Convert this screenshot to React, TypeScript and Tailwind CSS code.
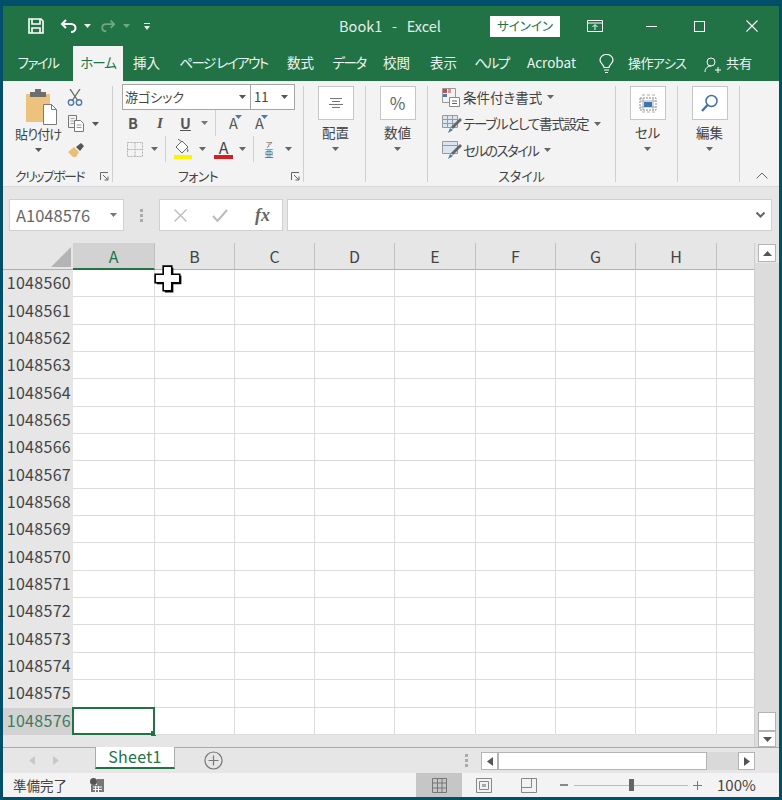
import React from "react";

const Caret = ({ c = "#666", className = "" }: { c?: string; className?: string }) => (
  <svg width="7" height="4" viewBox="0 0 7 4" className={className}><path d="M0 0h7L3.5 4z" fill={c} /></svg>
);

const Sep = ({ h = "h-[22px]" }: { h?: string }) => <div className={`w-px ${h} bg-[#d0d0d0]`} />;

const TitleBar = () => (
  <div className="h-[40px] flex items-center text-white shrink-0">
    <div className="w-[25px]" />
    <svg width="16" height="16" viewBox="0 0 16 16" fill="none" stroke="#fff" strokeWidth="1.6"><path d="M1 1h12l2 2v12H1z" /><path d="M4 1v5h8V1M4 15v-5h8v5" /></svg>
    <div className="w-[16px]" />
    <svg width="18" height="14" viewBox="0 0 18 14" fill="none" stroke="#fff" strokeWidth="2"><path d="M6 1L2 5l4 4" /><path d="M2 5h9c6 0 6 8 0 8" /></svg>
    <Caret c="#e6efe9" className="ml-[6px]" />
    <svg width="16" height="14" viewBox="0 0 18 14" fill="none" stroke="#6fa88a" strokeWidth="2" className="ml-[9px]"><path d="M12 1l4 4-4 4" /><path d="M16 5H7c-6 0-6 8 0 8" /></svg>
    <Caret c="#6fa88a" className="ml-[7px]" />
    <svg width="6" height="7" viewBox="0 0 6 7" className="ml-[14px]"><path d="M0 0h6v1H0z" fill="#e6efe9" /><path d="M0 3h6L3 7z" fill="#e6efe9" /></svg>
    <div className="ml-[188px] w-[104px] text-center text-[14.5px] text-[#e3eee8] whitespace-pre">Book1   -   Excel</div>
    <div className="ml-[48px] w-[70px] h-[21px] bg-white text-[#217346] text-[12.5px] flex items-center justify-center">サインイン</div>
    <svg width="16" height="12" viewBox="0 0 16 12" fill="none" stroke="#fff" className="ml-[27px]"><path d="M.5.5h15v11H.5zM.5 3h15" /><path d="M8 10V5M5.5 7L8 4.500 10.500 7" /></svg>
    <div className="ml-[43px] w-[11px] h-px bg-white" />
    <div className="ml-[37px] w-[11px] h-[11px] border border-white" />
    <svg width="12" height="12" viewBox="0 0 12 12" stroke="#fff" strokeWidth="1.1" className="ml-[41px]"><path d="M.5.5l11 11M11.500.5l-11 11" /></svg>
  </div>
);

const tabs: [string, string, string][] = [
  ["ファイル", "w-[70px]", "tracking-[-1.5px]"],
  ["ホーム", "w-[50px]", "tracking-[-1px]"],
  ["挿入", "w-[47px]", ""],
  ["ページ レイアウト", "w-[107px]", "tracking-[-1.5px]"],
  ["数式", "w-[47px]", ""],
  ["データ", "w-[50px]", "tracking-[-1.5px]"],
  ["校閲", "w-[45px]", ""],
  ["表示", "w-[49px]", ""],
  ["ヘルプ", "w-[47px]", "tracking-[-1.5px]"],
  ["Acrobat", "w-[73px]", ""],
];

const TabBar = () => (
  <div className="h-[35px] flex text-[13.5px] text-[#eef5f1] shrink-0">
    {tabs.map(([t, w, k]) => (
      <div key={t} className={`${w} ${k} flex items-center justify-center whitespace-nowrap pb-[2px] ${t === "ホーム" ? "bg-[#f3f3f3] text-[#217346]" : ""}`}>{t}</div>
    ))}
    <div className="w-[36px] flex items-center justify-center">
      <svg width="15" height="20" viewBox="0 0 15 19" fill="none" stroke="#fff" strokeWidth="1.2"><path d="M5 13c0-3-4-4-4-7.500a6.500 5.500 0 0 1 13 0C14 9 10 10 10 13z" /><path d="M5 15.500h5M6 18h3" /></svg>
    </div>
    <div className="ml-[4px] w-[57px] whitespace-nowrap flex items-center text-[13px] pb-[2px] tracking-[-0.6px]">操作アシス</div>
    <svg width="17" height="17" viewBox="0 0 17 17" fill="none" stroke="#fff" className="ml-[19px] mt-[11px]"><circle cx="7" cy="5" r="4" /><path d="M1 15c0-4 3-6 6-6M11 13h6M14 10v6" /></svg>
    <div className="ml-[5px] flex items-center text-[13px] pb-[1px]">共有</div>
  </div>
);

const PasteIcon = () => (
  <svg width="33" height="36" viewBox="0 0 33 36">
    <path d="M1 5h24v28H1z" fill="#ecc27d" />
    <path d="M5 3h5V0h6v3h5v5H5z" fill="#6e6e6e" />
    <path d="M18.500 15.500h8l5 5v15h-13z" fill="#fff" stroke="#7a7a7a" />
    <path d="M26.500 15.500v5h5" fill="none" stroke="#7a7a7a" />
  </svg>
);

const Scissors = () => (
  <svg width="16" height="17" viewBox="0 0 16 17" fill="none">
    <path d="M3 0l8 12M13 0L5 12" stroke="#666" strokeWidth="1.300" />
    <circle cx="4" cy="13.500" r="2.700" stroke="#4f7aa8" strokeWidth="1.400" />
    <circle cx="12" cy="13.500" r="2.700" stroke="#4f7aa8" strokeWidth="1.400" />
  </svg>
);

const Copy = () => (
  <svg width="17" height="17" viewBox="0 0 17 17" fill="none" stroke="#777">
    <path d="M.5.500h8v12h-8z" fill="#f3f3f3" />
    <path d="M2.500 3.500h4M2.500 6h4M2.500 8.500h4" stroke="#aaa" />
    <path d="M6.500 5.500h6l3 3v8h-9z" fill="#fff" />
    <path d="M8.500 10h5M8.500 12.500h5" stroke="#999" />
  </svg>
);

const Brush = () => (
  <svg width="16" height="14" viewBox="0 0 16 14">
    <path d="M0 9l6-5 5 5-3 5H5z" fill="#e8bf74" />
    <path d="M8 4l5-4 3 3-4 5z" fill="#555" />
  </svg>
);

const Launcher = () => (
  <svg width="9" height="9" viewBox="0 0 9 9" fill="none" stroke="#666" className="mt-[1px]"><path d="M.5 8V.500H8" /><path d="M3 3l5 5M8 4.500V8H4.500" /></svg>
);

const Label = ({ children, className = "" }: { children: React.ReactNode; className?: string }) => (
  <div className={`h-[12px] mt-[1px] flex items-center text-[13px] text-[#444] whitespace-nowrap ${className}`}>{children}</div>
);

const Clipboard = () => (
  <div className="w-[110px] border-r border-[#cfcfcf] h-[96px] mt-[5px] flex flex-col">
    <div className="flex h-[84px]">
      <div className="w-[67px] flex flex-col">
        <div className="mt-[3px] ml-[22px]"><PasteIcon /></div>
        <div className="ml-[12px] text-[13px] leading-[18px] tracking-[-0.8px]">貼り付け</div>
        <Caret c="#555" className="mt-[5px] ml-[32px]" />
      </div>
      <div className="flex flex-col pt-[3px]">
        <div className="ml-[-3px]"><Scissors /></div>
        <div className="flex items-center mt-[9px] ml-[-2px]"><Copy /><Caret c="#555" className="ml-[7px]" /></div>
        <div className="ml-[-2px] mt-[11px]"><Brush /></div>
      </div>
    </div>
    <Label className="pl-[12px] pr-[3px] justify-between"><span className="tracking-[-1.6px]">クリップボード</span><Launcher /></Label>
  </div>
);

const Fill = () => (
  <svg width="20" height="20" viewBox="0 0 20 20">
    <path d="M3 8l6-6 6 6-6 6z" fill="#fff" stroke="#666" />
    <path d="M5 0l4 3" stroke="#666" fill="none" />
    <path d="M14 9c2 2 2 4 0 4z" fill="#5b8bbd" />
    <path d="M1 16h18v4H1z" fill="#fff200" />
  </svg>
);

const FontGroup = () => (
  <div className="w-[191px] border-r border-[#cfcfcf] h-[96px] mt-[5px] flex flex-col pl-[9px]">
    <div className="h-[84px] flex flex-col">
      <div className="flex h-[26px] mt-[-2px]">
        <div className="w-[129px] bg-white border border-[#a6a6a6] flex items-center justify-between px-[2px] text-[13px]">
          <span>游ゴシック</span><Caret c="#555" className="mr-[2px]" />
        </div>
        <div className="w-[44px] bg-white border border-l-0 border-[#a6a6a6] flex items-center justify-between pl-[3px] pr-[6px] text-[13px]">
          <span>11</span><Caret c="#555" />
        </div>
      </div>
      <div className="flex items-center h-[26px] text-[#555]">
        <div className="w-[26px] pl-[6px] font-bold text-[14.5px]">B</div>
        <div className="w-[26px] pl-[9px] italic font-bold text-[15px] font-['Liberation_Serif',serif]">I</div>
        <div className="w-[25px] pl-[6px] font-bold text-[14.5px] underline">U</div>
        <Caret c="#777" className="ml-[2px]" />
        <div className="ml-[7px] mr-[13px]"><Sep h="h-[26px]" /></div>
        <div className="w-[26px] text-[14.5px] flex items-start">A<Caret c="#4f7aa8" className="mt-[3px] -ml-[3px]" /></div>
        <div className="text-[14.5px] flex items-start">A<Caret c="#4f7aa8" className="mt-[3px] -ml-[3px]" /></div>
      </div>
      <div className="flex items-center h-[26px]">
        <svg width="16" height="15" viewBox="0 0 16 15" fill="none" stroke="#b0b0b0" strokeDasharray="2 1" className="ml-[5px]"><path d="M.5.500h15v14H.5zM8 .5v14M.5 7.500h15" /></svg>
        <Caret c="#666" className="ml-[8px]" />
        <div className="ml-[7px]"><Sep h="h-[26px]" /></div>
        <div className="ml-[7px]"><Fill /></div>
        <Caret c="#666" className="ml-[6px]" />
        <div className="ml-[8px] w-[19px] flex flex-col items-center leading-none">
          <span className="text-[16px] h-[16px] leading-[16px] text-[#444]">A</span>
          <div className="w-[19px] h-[4px] bg-[#d81e1e]" />
        </div>
        <Caret c="#666" className="ml-[6px]" />
        <div className="ml-[7px]"><Sep h="h-[26px]" /></div>
        <div className="ml-[10px] w-[10px] flex flex-col items-center text-[#555] leading-none">
          <span className="text-[7px] h-[9px] leading-[9px]">ア</span>
          <span className="text-[9px] h-[10px] leading-[10px]">亜</span>
        </div>
        <Caret c="#666" className="ml-[11px]" />
      </div>
    </div>
    <Label className="justify-between pr-[3px]"><span className="ml-[56px] tracking-[-0.6px]">フォント</span><Launcher /></Label>
  </div>
);

const BigGroup = ({ label, icon }: { label: string; icon: React.ReactNode }) => (
  <div className="w-[62px] border-r border-[#cfcfcf] h-[96px] mt-[5px] flex flex-col items-center pl-[2px]">
    <div className="w-[36px] h-[34px] bg-white border border-[#c6c6c6] flex items-center justify-center">{icon}</div>
    <div className="text-[13.5px] mt-[3px] leading-[18px]">{label}</div>
    <Caret c="#666" className="mt-[6px]" />
  </div>
);

const AlignIcon = () => (
  <svg width="14" height="10" viewBox="0 0 14 10" stroke="#777"><path d="M1 .5h12M3 3.500h8M0 6.500h14M3 9.500h8" /></svg>
);

const CellIcon = () => (
  <svg width="18" height="19" viewBox="0 0 18 19" fill="none">
    <path d="M1 4h16v12H1z" stroke="#888" strokeDasharray="2 1" />
    <path d="M3 1h3M8 1h3M13 1h3M3 18h3M8 18h3M13 18h3M4 4v12M14 4v12M1 7h16M1 13h16" stroke="#aaa" />
    <path d="M5 8h8v5H5z" fill="#3d76b0" />
  </svg>
);

const SearchIcon = () => (
  <svg width="18" height="18" viewBox="0 0 18 18" fill="none"><circle cx="10.500" cy="7" r="5.500" stroke="#3f6fa5" strokeWidth="1.500" /><path d="M6.500 11L1 17" stroke="#3f6fa5" strokeWidth="2.200" /></svg>
);

const Cond = () => (
  <svg width="18" height="19" viewBox="0 0 18 19" fill="none">
    <path d="M.5.500h13v14H.5z" stroke="#999" />
    <path d="M1 1h4v4H1z" fill="#c0504d" /><path d="M1 6h4v3H1z" fill="#4f7aa8" /><path d="M6 1h3v4H6z" fill="#d99694" />
    <path d="M7.500 9.500h10v9h-10z" fill="#fff" stroke="#888" /><path d="M10 13h5M10 15.500h5" stroke="#666" />
  </svg>
);

const TableIcon = () => (
  <svg width="20" height="18" viewBox="0 0 20 18" fill="none">
    <path d="M.5.500h15v12H.5z" stroke="#999" fill="#dbe5f1" />
    <path d="M.5 4.500h15M.5 8.500h15M5.500.5v12M10.500.5v12" stroke="#999" />
    <path d="M18 3l2 2-9 9-2-2z" fill="#666" /><path d="M8 13l3 2-5 3z" fill="#4f7aa8" />
  </svg>
);

const StyleIcon = () => (
  <svg width="20" height="18" viewBox="0 0 20 18" fill="none">
    <path d="M.5.500h15v12H.5z" stroke="#999" fill="#dbe5f1" />
    <path d="M.5 4.500h15" stroke="#999" />
    <path d="M18 3l2 2-9 9-2-2z" fill="#666" /><path d="M8 13l3 2-5 3z" fill="#4f7aa8" />
  </svg>
);

const StyleGroup = () => (
  <div className="w-[188px] border-r border-[#cfcfcf] h-[96px] mt-[5px] flex flex-col">
    <div className="h-[84px] pl-[14px] flex flex-col text-[13.5px] -mt-[1px]">
      <div className="h-[26px] flex items-center gap-[3px] pb-[2px]"><Cond /><span>条件付き書式</span><Caret c="#666" className="ml-[2px]" /></div>
      <div className="h-[26px] flex items-center gap-[1px] pb-[1px]"><TableIcon /><span className="tracking-[-1.2px]">テーブルとして書式設定</span><Caret c="#666" className="ml-[5px]" /></div>
      <div className="h-[26px] flex items-center gap-[1px]"><StyleIcon /><span className="tracking-[-1.7px]">セルのスタイル</span><Caret c="#666" className="ml-[5px]" /></div>
    </div>
    <Label className="justify-center mt-[2px] text-[13.5px]">スタイル</Label>
  </div>
);

const Ribbon = () => (
  <div className="h-[106px] bg-[#f3f3f3] border-b border-[#d8d8d8] flex text-[#444] shrink-0 relative">
    <Clipboard />
    <FontGroup />
    <BigGroup label="配置" icon={<AlignIcon />} />
    <BigGroup label="数値" icon={<span className="text-[17px] text-[#666]">%</span>} />
    <StyleGroup />
    <BigGroup label="セル" icon={<CellIcon />} />
    <BigGroup label="編集" icon={<SearchIcon />} />
    <svg width="12" height="7" viewBox="0 0 12 7" fill="none" stroke="#666" className="ml-[16px] mt-[91px]"><path d="M.5 6.500L6 1l5.500 5.500" /></svg>
  </div>
);

const FormulaBar = () => (
  <div className="h-[56px] bg-[#e6e6e6] flex pt-[12px] pl-[6px] shrink-0">
    <div className="w-[115px] h-[32px] bg-white border border-[#d0d0d0] flex items-center justify-between pl-[6px] pr-[6px] text-[16.5px] text-[#666]">
      <span>A1048576</span><Caret c="#777" />
    </div>
    <div className="w-[35px] h-[32px] flex flex-col items-center justify-center gap-[2px]">
      <div className="w-[3px] h-[3px] bg-[#aaa]" /><div className="w-[3px] h-[3px] bg-[#aaa]" /><div className="w-[3px] h-[3px] bg-[#aaa]" />
    </div>
    <div className="w-[124px] h-[32px] bg-white border border-[#d0d0d0] flex items-center">
      <svg width="13" height="13" viewBox="0 0 13 13" stroke="#bbb" strokeWidth="1.400" className="ml-[14px]"><path d="M.5.5l12 12M12.500.5l-12 12" /></svg>
      <svg width="16" height="13" viewBox="0 0 16 13" fill="none" stroke="#bbb" strokeWidth="2" className="ml-[25px]"><path d="M1 7l4.500 5L15 1" /></svg>
      <span className="ml-[27px] italic font-bold text-[18px] text-[#666] font-['Liberation_Serif',serif]">fx</span>
    </div>
    <div className="ml-[4px] w-[485px] h-[32px] bg-white border border-[#d0d0d0] flex items-center justify-end pr-[6px]">
      <svg width="9" height="6" viewBox="0 0 9 6" fill="none" stroke="#666" strokeWidth="2"><path d="M.5.5l4 4 4-4" /></svg>
    </div>
  </div>
);

const colW = ["w-[82px]", "w-[80px]", "w-[80px]", "w-[80px]", "w-[81px]", "w-[80px]", "w-[80px]", "w-[81px]"];
const colN = ["A", "B", "C", "D", "E", "F", "G", "H"];
const rows = Array.from({ length: 17 }, (_, i) => 1048560 + i);

const Sheet = () => (
  <div className="w-[751px] flex flex-col relative">
    <div className="flex h-[27px] bg-[#e6e6e6]">
      <div className="w-[70px] border-b border-[#b0b0b0] flex items-end justify-end pr-[2px] pb-[2px]">
        <svg width="20" height="20" viewBox="0 0 20 20"><path d="M20 0v20H0z" fill="#b4b4b4" /></svg>
      </div>
      {colN.map((c, i) => (
        <div key={c} className={`${colW[i]} border-r border-[#c0c0c0] flex items-center justify-center text-[16px] ${i === 0 ? "bg-[#d2d2d2] text-[#217346] border-b-2 border-b-[#217346]" : "text-[#444] border-b border-b-[#b0b0b0]"}`}>{c}</div>
      ))}
      <div className="flex-1 border-b border-[#b0b0b0]" />
    </div>
    {rows.map((r, ri) => {
      const last = ri === rows.length - 1;
      return (
        <div key={r} className="flex h-[27.35px]">
          <div className={`w-[70px] flex items-center justify-end pr-[2px] pb-[3px] text-[16px] tracking-[0.3px] ${last ? "bg-[#d2d2d2] text-[#3f7a5c]" : "bg-[#e6e6e6] text-[#444]"}`}>{r}</div>
          {colW.map((w, i) => (
            <div key={i} className={`${w} bg-white border-r border-b border-[#dcdcdc] relative`}>
              {last && i === 0 && (
                <div className="absolute -left-[1px] -top-[1px] w-[83px] h-[28px] border-2 border-[#217346]">
                  <div className="absolute -right-[3px] -bottom-[3px] w-[5px] h-[5px] bg-[#217346]" />
                </div>
              )}
            </div>
          ))}
          <div className="flex-1 bg-white border-b border-[#dcdcdc]" />
        </div>
      );
    })}
    <div className="h-[12px] bg-[#e6e6e6]" />
    <svg width="30" height="30" viewBox="0 0 28 28" className="absolute left-[150px] top-[21px]">
      <path d="M9.500 2h8v7.500H25v8h-7.500V25h-8v-7.500H2v-8h7.500z" fill="#000" transform="translate(1.500 1.500)" />
      <path d="M9.500 2h8v7.500H25v8h-7.500V25h-8v-7.500H2v-8h7.500z" fill="#fff" stroke="#000" strokeWidth="1.500" />
    </svg>
  </div>
);

const VScroll = () => (
  <div className="w-[25px] bg-[#dcdcdc] flex flex-col items-center border-l border-[#cfcfcf] relative">
    <div className="h-[20px] w-full bg-[#e6e6e6] absolute top-0" />
    <div className="relative mt-[1px] w-[18px] h-[18px] bg-white border border-[#b4b4b4] flex items-center justify-center"><svg width="9" height="5" viewBox="0 0 9 5"><path d="M4.500 0L9 5H0z" fill="#555" /></svg></div>
    <div className="flex-1" />
    <div className="w-[18px] h-[19px] bg-white border border-[#b4b4b4]" />
    <div className="w-[18px] h-[16px] bg-white border border-[#b4b4b4] flex items-center justify-center"><svg width="9" height="5" viewBox="0 0 9 5"><path d="M4.500 5L9 0H0z" fill="#555" /></svg></div>
  </div>
);

const SheetTabs = () => (
  <div className="h-[26px] bg-[#e6e6e6] border-t border-[#ababab] flex shrink-0 text-[#444]">
    <div className="w-[92px] h-[25px] flex items-center pl-[26px] gap-[18px]">
      <svg width="6" height="9" viewBox="0 0 6 9"><path d="M6 0v9L0 4.500z" fill="#c8c8c8" /></svg>
      <svg width="6" height="9" viewBox="0 0 6 9"><path d="M0 0v9l6-4.500z" fill="#c8c8c8" /></svg>
    </div>
    <div className="w-[80px] h-[22px] -mt-px bg-white border-x border-b-2 border-x-[#ababab] border-b-[#217346] flex items-center justify-center text-[16px] tracking-[0.3px] text-[#217346] pb-[2px]">Sheet1</div>
    <div className="ml-[29px] h-[25px] flex items-center">
      <svg width="19" height="19" viewBox="0 0 19 19" fill="none" stroke="#777" strokeWidth="1.200"><circle cx="9.500" cy="9.500" r="8.500" /><path d="M9.500 4.500v10M4.500 9.500h10" /></svg>
    </div>
    <div className="ml-[242px] h-[25px] flex flex-col justify-center gap-[2px]">
      <div className="w-[3px] h-[3px] bg-[#aaa]" /><div className="w-[3px] h-[3px] bg-[#aaa]" /><div className="w-[3px] h-[3px] bg-[#aaa]" />
    </div>
    <div className="ml-[13px] mt-[4px] w-[274px] h-[18px] bg-[#d9d9d9] flex">
      <div className="w-[17px] bg-white border border-[#b4b4b4] flex items-center justify-center"><svg width="6" height="9" viewBox="0 0 6 9"><path d="M6 0v9L0 4.500z" fill="#555" /></svg></div>
      <div className="w-[209px] bg-white border border-[#b4b4b4]" />
      <div className="flex-1" />
      <div className="w-[17px] bg-white border border-[#b4b4b4] flex items-center justify-center"><svg width="6" height="9" viewBox="0 0 6 9"><path d="M0 0v9l6-4.500z" fill="#555" /></svg></div>
    </div>
  </div>
);

const StatusBar = () => (
  <div className="h-[24px] bg-[#f3f3f3] flex items-center text-[#444] shrink-0">
    <span className="ml-[10px] text-[13.5px]">準備完了</span>
    <svg width="14" height="14" viewBox="0 0 14 14" className="ml-[23px]"><circle cx="3.500" cy="3.500" r="3.500" fill="#555" /><path d="M7 1h7v13H1V7h6z" fill="#777" /><path d="M3 9h9M3 11.500h9M5.500 8v6M8.500 8v6" stroke="#f3f3f3" /></svg>
    <div className="ml-[312px] w-[46px] h-[24px] bg-[#c6c6c6] flex items-center justify-center">
      <svg width="15" height="15" viewBox="0 0 15 15" fill="none" stroke="#777"><path d="M.5.500h14v14H.5zM5.500.5v14M10 .5v14M.5 5h14M.5 10h14" /></svg>
    </div>
    <svg width="16" height="15" viewBox="0 0 16 15" fill="none" stroke="#888" className="ml-[14px]"><path d="M.5.500h15v14H.5zM3.500 3.500h9v8h-9z" /><path d="M6 6h4v3H6z" fill="#aaa" stroke="none" /></svg>
    <svg width="16" height="15" viewBox="0 0 16 15" fill="none" stroke="#888" className="ml-[29px]"><path d="M.5.500h15v14H.5zM.5 9.500h10V.5" /><path d="M10.500.5h5" /></svg>
    <div className="ml-[23px] w-[8px] h-[2px] bg-[#888]" />
    <div className="ml-[6px] w-[114px] h-px bg-[#bbb] relative flex justify-center">
      <div className="absolute left-[55px] -top-[6px] w-[5px] h-[12px] bg-[#666]" />
    </div>
    <svg width="9" height="9" viewBox="0 0 9 9" stroke="#777" className="ml-[5px]"><path d="M0 4.500h9M4.500 0v9" /></svg>
    <span className="ml-[15px] text-[15px]">100%</span>
  </div>
);

export default function App() {
  return (
    <div className="w-[782px] h-[800px] border-t-[6px] border-x-[3px] border-b-[3px] border-[#024f6b] bg-[#217346] flex flex-col overflow-hidden font-['Noto_Sans_CJK_JP','Noto_Sans',sans-serif] [font-feature-settings:'palt']">
      <TitleBar />
      <TabBar />
      <Ribbon />
      <FormulaBar />
      <div className="flex h-[504px] shrink-0 overflow-hidden">
        <Sheet />
        <VScroll />
      </div>
      <SheetTabs />
      <StatusBar />
    </div>
  );
}
